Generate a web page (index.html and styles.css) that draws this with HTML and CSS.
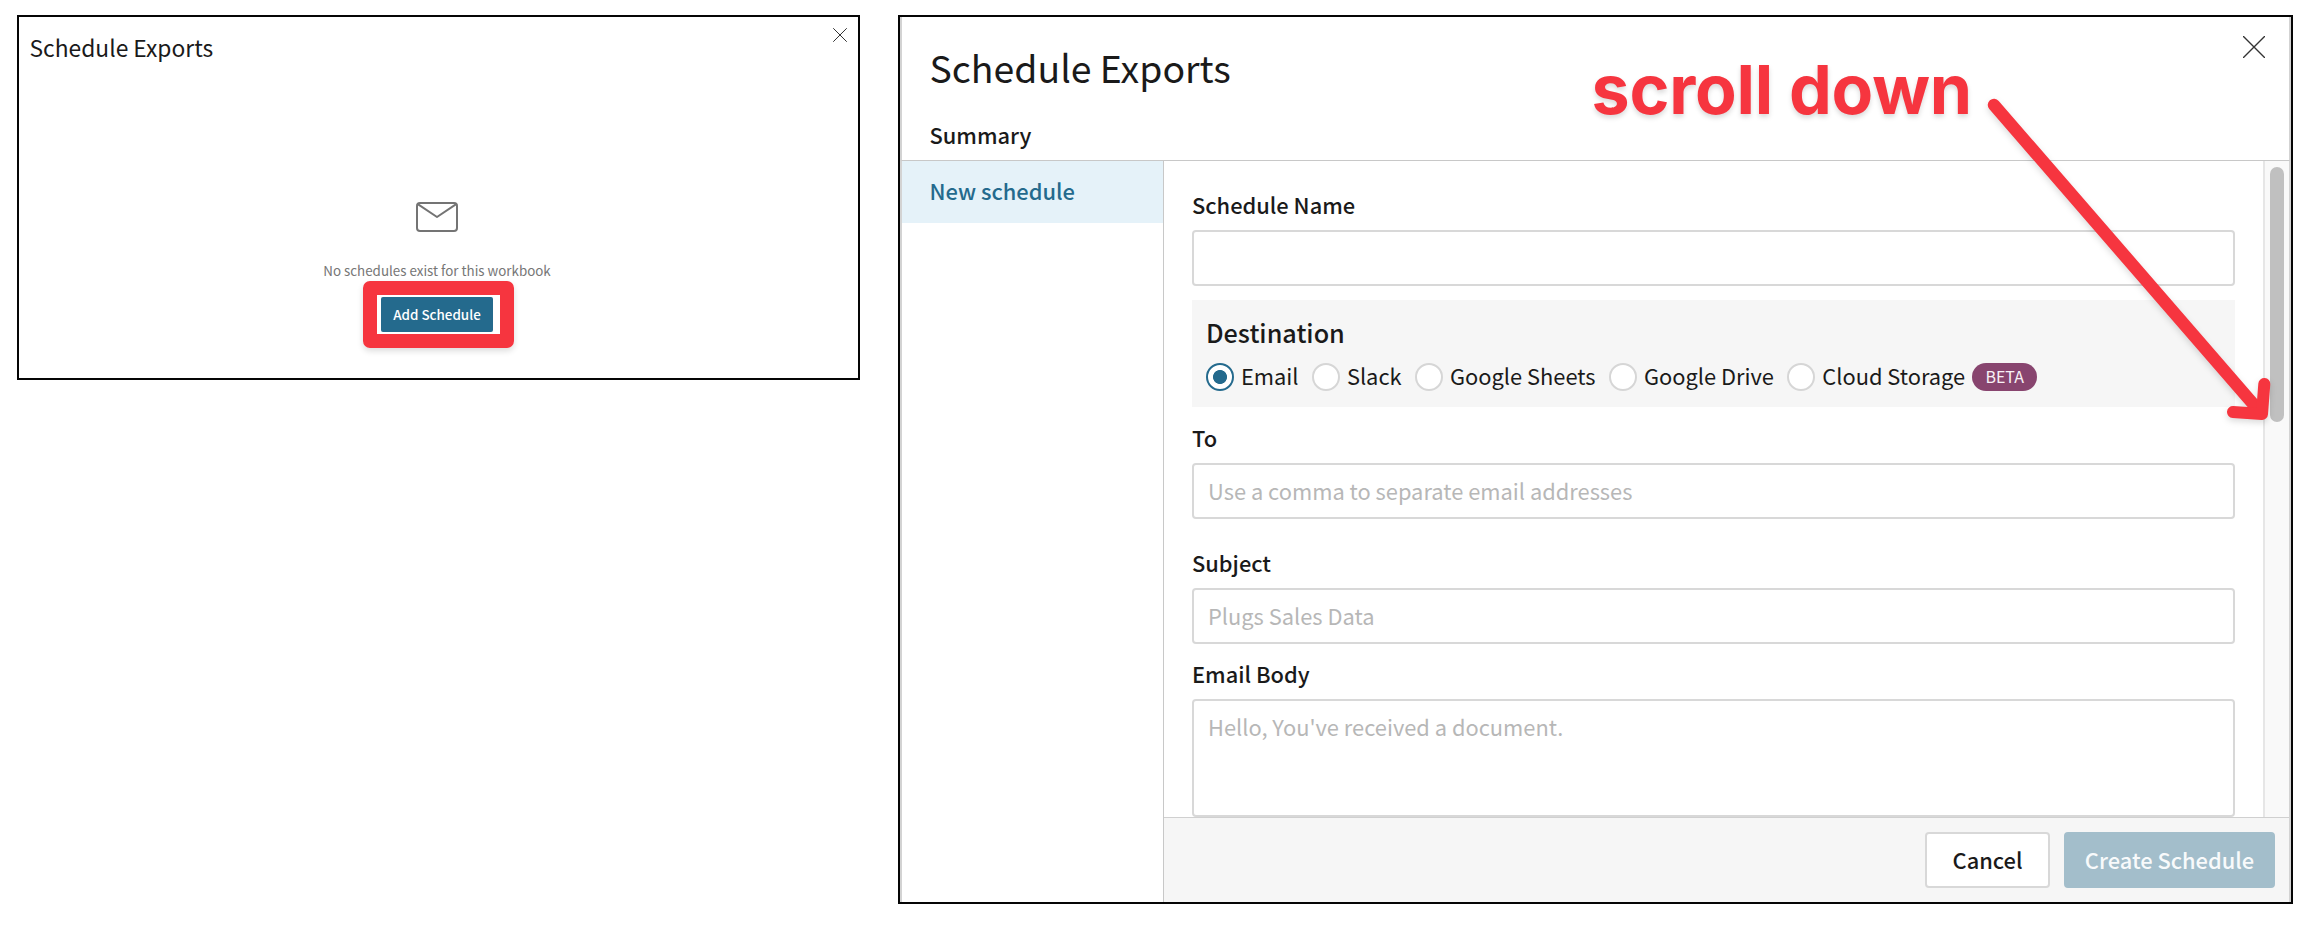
FILE: index.html
```
<!DOCTYPE html>
<html lang="en">
<head>
<meta charset="utf-8">
<title>Schedule Exports</title>
<link rel="stylesheet" href="styles.css">
</head>
<body>
<section class="panel panel-empty">
  <header class="empty-header">
    <h2 class="empty-title">Schedule Exports</h2>
    <svg class="close-small" viewBox="0 0 14 14"><path d="M.5.5l13 13M13.5.5l-13 13"/></svg>
  </header>
  <div class="empty-state">
    <svg class="envelope" viewBox="0 0 42 30"><rect x="1" y="1" width="40" height="28" rx="3"/><path d="M1.8 2.2L21 15 40.2 2.2"/></svg>
    <p class="empty-text">No schedules exist for this workbook</p>
    <div class="add-wrap">
      <span class="highlight"></span>
      <button class="add-button">Add Schedule</button>
    </div>
  </div>
</section>

<section class="panel panel-form">
  <header class="header">
    <div class="header-text">
      <h1 class="title">Schedule Exports</h1>
      <p class="summary">Summary</p>
    </div>
    <svg class="close-large" viewBox="0 0 22 22"><path d="M.5.5l21 21M21.5.5l-21 21"/></svg>
  </header>
  <div class="body">
    <nav class="sidebar"><div class="sidebar-item">New schedule</div></nav>
    <div class="main">
      <div class="scroll-area">
        <form class="form">
          <label class="label">Schedule Name</label>
          <div class="input"></div>
          <div class="destination">
            <h3 class="destination-title">Destination</h3>
            <div class="radios">
              <span class="radio radio-on"></span><span class="option">Email</span>
              <span class="radio"></span><span class="option">Slack</span>
              <span class="radio"></span><span class="option">Google Sheets</span>
              <span class="radio"></span><span class="option">Google Drive</span>
              <span class="radio"></span><span class="option option-last">Cloud Storage</span>
              <span class="badge">BETA</span>
            </div>
          </div>
          <label class="label">To</label>
          <div class="input input-to">Use a comma to separate email addresses</div>
          <label class="label">Subject</label>
          <div class="input input-subject">Plugs Sales Data</div>
          <label class="label">Email Body</label>
          <div class="input input-area">Hello, You've received a document.</div>
        </form>
        <div class="track"><div class="thumb"></div></div>
      </div>
      <footer class="footer">
        <button class="button">Cancel</button>
        <button class="button button-primary">Create Schedule</button>
      </footer>
    </div>
  </div>
</section>

<div class="note">scroll down</div>
<svg class="arrow" viewBox="0 0 300 350">
  <path d="M14 15L281 323" stroke-width="12.5"/>
  <path d="M253 322l29 2 2.3-30" stroke-width="12"/>
</svg>
</body>
</html>
```
FILE: styles.css
```
* { box-sizing: border-box; margin: 0; }
body {
  display: flex; align-items: flex-start; gap: 38px;
  position: relative; width: 2310px; height: 936px; padding: 15px 17px;
  overflow: hidden; background: #fff; color: #1a1a1a;
  font-family: "Noto Sans CJK SC", "Open Sans", sans-serif; font-size: 21.85px;
}
h1, h2, h3 { font-weight: 400; }
svg { fill: none; stroke-linecap: round; stroke-linejoin: round; flex: none; }
button { font-family: inherit; padding: 0; border: 0; white-space: nowrap; }
.panel { border: 2px solid #050505; background: #fff; flex: none; }

/* Empty list dialog */
.panel-empty { width: 843px; height: 365px; }
.empty-header { display: flex; justify-content: space-between; padding: 11px 11px 0 10.5px; }
.empty-title { font-size: 22.8px; line-height: 30px; padding-top: 5px; }
.close-small { width: 14px; height: 14px; stroke: #333; stroke-width: 1; }
.empty-state { display: flex; flex-direction: column; align-items: center; padding: 139px 3px 0 0; }
.envelope { width: 42px; height: 30px; stroke: #747474; stroke-width: 2; }
.empty-text { margin-top: 28px; font-size: 13.37px; line-height: 20px; color: #767676; }
.add-wrap { position: relative; margin-top: 17px; }
.highlight {
  position: absolute; left: -18px; top: -16px; width: 151px; height: 67px;
  border: 14px solid #f6353f; border-radius: 7px; box-shadow: 0 3px 6px rgba(0,0,0,.14);
}
.add-button {
  position: relative; display: block; width: 112px; height: 35px; border-radius: 2px;
  background: #246a8d; color: #fff; font-size: 13.4px; font-weight: 500; line-height: 35px;
}

/* Schedule form dialog */
.panel-form { display: flex; flex-direction: column; width: 1395px; height: 889px; }
.header {
  display: flex; justify-content: space-between; height: 144px; padding: 28px 24px 0 27.5px;
  border: solid #d3d3d3; border-width: 0 2px 1px; border-bottom-color: #c8c8c8;
}
.title { font-size: 37.4px; line-height: 44px; }
.summary { margin-top: 31px; font-weight: 500; line-height: 30px; }
.close-large { width: 22px; height: 22px; margin-top: -9px; stroke: #333; stroke-width: 1.4; }
.body { display: flex; flex: 1; min-height: 0; border: solid #d3d3d3; border-width: 0 2px 0; }
.sidebar { width: 262px; border-right: 1px solid #c8c8c8; }
.sidebar-item { height: 62px; padding-left: 27.5px; background: #e5f2f9; color: #246a8d; font-weight: 500; line-height: 60px; }
.main { display: flex; flex-direction: column; flex: 1; }
.scroll-area { display: flex; height: 656px; }
.form { flex: 1; padding: 28px 28px 0; }
.label { display: block; height: 41px; line-height: 31px; font-weight: 500; }
.input {
  height: 56px; padding-left: 14px; border: 2px solid #d8d8d8; border-radius: 4px;
  line-height: 51px; color: #b7b7b7;
}
.destination { height: 107px; margin: 14px 0 15px; padding: 16px 14px 0; background: #f6f6f6; }
.destination-title { font-size: 25.2px; font-weight: 500; line-height: 32px; }
.radios { display: flex; align-items: center; height: 28px; margin-top: 15px; }
.radio { width: 28px; height: 28px; border: 2px solid #d6d6d6; border-radius: 50%; background: #fff; flex: none; }
.radio-on { border-color: #246a8d; background: radial-gradient(circle, #246a8d 6.6px, #fff 7.4px); }
.option { margin: -3px 13.5px 0 6.9px; line-height: 28px; white-space: nowrap; }
.option-last { margin-right: 7px; }
.badge { width: 65px; height: 28px; border-radius: 14px; background: #88456f; color: #f8f2f6; font-size: 16px; line-height: 27px; text-align: center; }
.input-to { margin-bottom: 28px; }
.input-subject { margin-bottom: 14px; }
.input-area { height: 118px; }
.track { width: 26px; padding: 6px 0 0 5px; border-left: 2px solid #e6e6e6; background: #f9f9f9; }
.thumb { width: 14px; height: 255px; border-radius: 7px; background: #c0c0c0; }
.footer {
  display: flex; justify-content: flex-end; gap: 14px; flex: 1; padding: 14px 14px 0 0;
  border-top: 1px solid #d0d0d0; background: #f6f6f6;
}
.button {
  width: 125px; height: 56px; border: 2px solid #d8d8d8; border-radius: 4px; background: #fff;
  color: #1a1a1a; font-size: 21.85px; font-weight: 500; line-height: 50px;
}
.button-primary { width: 211px; border-color: #a3becb; background: #a3becb; color: #f8fafb; }

/* Callout drawn over the dialog */
.note {
  position: absolute; left: 1591.5px; top: 49px; color: #f6353f; white-space: nowrap;
  font-family: Inter, sans-serif; font-size: 68px; font-weight: 750; line-height: 80px;
  letter-spacing: -.2px; text-shadow: 0 3px 5px rgba(0,0,0,.15);
}
.arrow {
  position: absolute; left: 1980px; top: 90px; width: 300px; height: 350px;
  stroke: #f6353f; filter: drop-shadow(0 3px 3px rgba(0,0,0,.14));
}
```
